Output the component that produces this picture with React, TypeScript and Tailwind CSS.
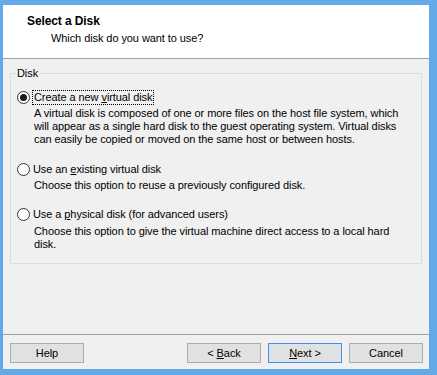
import React from 'react'

const font = { fontFamily: '"Liberation Sans", Arial, sans-serif' }

function Radio({ checked }: { checked?: boolean }) {
  return (
    <span className="w-[13px] h-[13px] rounded-full border border-[#333333] bg-white flex items-center justify-center shrink-0">
      {checked && <span className="w-[7px] h-[7px] rounded-full bg-[#1a1a1a]" />}
    </span>
  )
}

function Btn({ children, primary }: { children: React.ReactNode; primary?: boolean }) {
  return (
    <button
      className={
        primary
          ? 'w-[74px] h-[20px] bg-[#e1e1e1] border border-[#3a93ee] text-[11px] leading-[13px] text-black'
          : 'w-[74px] h-[20px] bg-[#e1e1e1] border border-[#adadad] text-[11px] leading-[13px] text-black'
      }
    >
      {children}
    </button>
  )
}

export default function App() {
  return (
    <div className="w-[437px] h-[375px] bg-[#64aae8] pt-[5px] pl-[3px] pr-[8px] pb-[6px]" style={font}>
      <div className="w-full h-full bg-[#f0f0f0] flex flex-col text-[11px] leading-[13px] tracking-[-0.08px] text-black">
        {/* header */}
        <div className="h-[54px] bg-white border-b border-[#a0a0a0] pt-[9px]">
          <div className="pl-[24px] font-bold text-[12px] leading-[14px] tracking-[-0.1px]">Select a Disk</div>
          <div className="pl-[48px] mt-[4px] leading-[13px]">Which disk do you want to use?</div>
        </div>

        {/* group box */}
        <div className="relative mt-[14px] mx-[7px] border border-[#dcdcdc] pt-[16px] pb-[12px] pl-[6px] pr-[6px]">
          <span className="absolute -top-[7px] left-[5px] px-[1px] bg-[#f0f0f0] leading-[13px]">Disk</span>

          <div className="flex items-center h-[14px]">
            <Radio checked />
            <span className="ml-[2px] px-[1px] h-[15px] flex items-center border border-dotted border-black whitespace-pre">
              Create a new <span className="underline">v</span>irtual disk
            </span>
          </div>
          <div className="ml-[17px] mt-[3px]">
            A virtual disk is composed of one or more files on the host file system, which
            <br />
            will appear as a single hard disk to the guest operating system. Virtual disks
            <br />
            can easily be copied or moved on the same host or between hosts.
          </div>

          <div className="flex items-center h-[14px] mt-[16px]">
            <Radio />
            <span className="ml-[3px]">
              Use an <span className="underline">e</span>xisting virtual disk
            </span>
          </div>
          <div className="ml-[17px] mt-[3px]">Choose this option to reuse a previously configured disk.</div>

          <div className="flex items-center h-[14px] mt-[15px]">
            <Radio />
            <span className="ml-[3px]">
              Use a <span className="underline">p</span>hysical disk (for advanced users)
            </span>
          </div>
          <div className="ml-[17px] mt-[4px]">
            Choose this option to give the virtual machine direct access to a local hard
            <br />
            disk.
          </div>
        </div>

        {/* footer */}
        <div className="mt-auto border-t border-[#a0a0a0] pt-[8px] pb-[6px] pl-[7px] pr-[6px] flex items-center">
          <Btn>Help</Btn>
          <div className="ml-auto flex gap-[7px]">
            <Btn>
              &lt; <span className="underline">B</span>ack
            </Btn>
            <Btn primary>
              <span className="underline">N</span>ext &gt;
            </Btn>
            <Btn>Cancel</Btn>
          </div>
        </div>
      </div>
    </div>
  )
}
